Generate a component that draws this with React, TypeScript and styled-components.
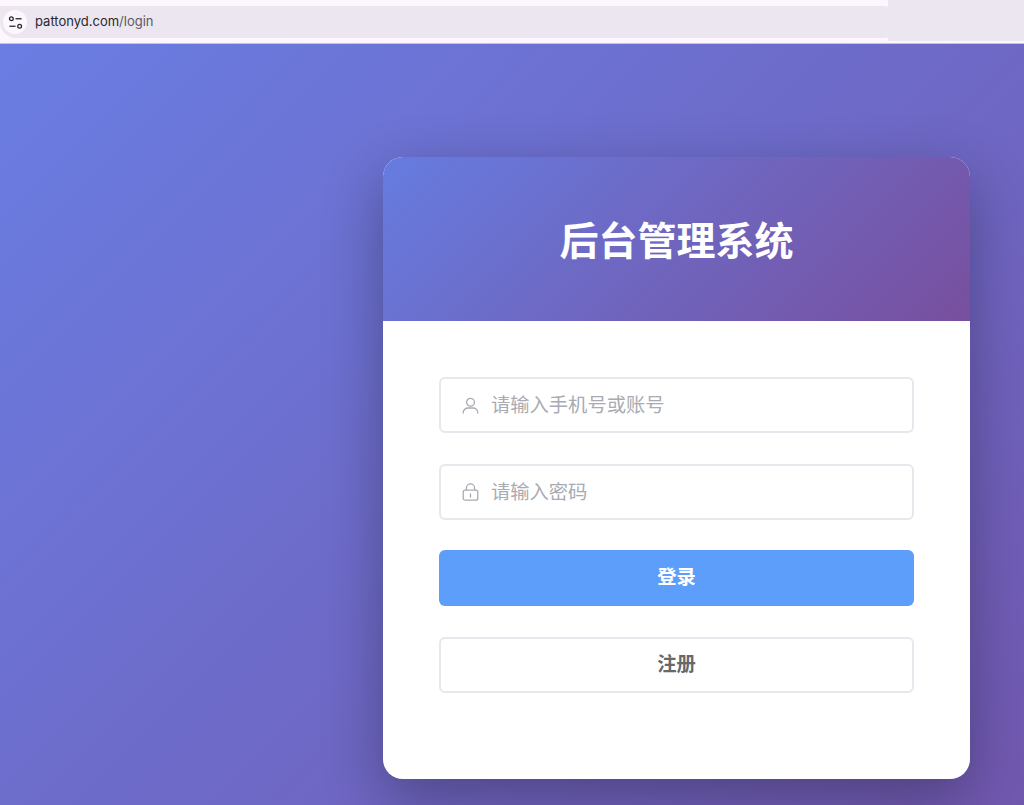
import React from "react";
import styled, { createGlobalStyle } from "styled-components";

const GlobalStyle = createGlobalStyle`
  html, body {
    margin: 0;
    padding: 0;
    height: 100%;
    overflow: hidden;
  }
  body {
    font-family: "Inter", "Noto Sans CJK SC", sans-serif;
  }
`;

const Page = styled.div`
  width: 1024px;
  height: 805px;
  display: flex;
  flex-direction: column;
  overflow: hidden;
`;

const BrowserBar = styled.header`
  height: 44px;
  flex: none;
  display: flex;
  background: #fdf7fd;
  box-sizing: border-box;
  border-bottom: 1px solid #c9bfe0;
`;

const UrlPill = styled.div`
  width: 888px;
  height: 32px;
  margin-top: 6px;
  display: flex;
  align-items: center;
  gap: 8px;
  box-sizing: border-box;
  background: #ebe6f0;
  border-radius: 0 2px 2px 16px;
`;

const BarFiller = styled.div`
  flex: 1;
  height: 41px;
  background: #ebe6f0;
`;

const TuneBadge = styled.span`
  width: 24px;
  height: 24px;
  margin-left: 3px;
  border-radius: 50%;
  background: #fdf7fd;
  display: flex;
  align-items: center;
  justify-content: center;
`;

const UrlText = styled.span`
  font-size: 13px;
  color: #2a282e;
  font-family: "Inter", sans-serif;
  margin-bottom: 2px;
`;

const UrlPath = styled.span`
  color: #5c5962;
`;

const Stage = styled.main`
  flex: 1;
  background: linear-gradient(135deg, #6a7de2 0%, #734fa3 125%);
  display: flex;
  justify-content: flex-end;
  align-items: flex-start;
  padding: 113px 54px 0 0;
`;

const Card = styled.section`
  width: 587px;
  height: 622px;
  border-radius: 20px;
  background: #fff;
  overflow: hidden;
  box-shadow: 0 20px 60px rgba(0, 0, 0, 0.3);
`;

const CardHeader = styled.div`
  height: 164px;
  background: linear-gradient(135deg, #667ce0 0%, #784f9e 100%);
  display: flex;
  align-items: center;
  justify-content: center;
`;

const Title = styled.h1`
  margin: 0 0 2px;
  color: #fff;
  font-size: 39px;
  font-weight: 700;
  font-family: "Noto Sans CJK SC", sans-serif;
  line-height: 1;
`;

const Form = styled.div`
  display: flex;
  flex-direction: column;
  gap: 30px;
  padding: 56px 56px 0;
`;

const Group = styled.div`
  display: flex;
  flex-direction: column;
  gap: 31px;
`;

const Field = styled.label`
  height: 56px;
  box-sizing: border-box;
  border: 2px solid #e6e8ee;
  border-radius: 6px;
  display: flex;
  align-items: center;
  gap: 12px;
  padding-left: 21px;
`;

const Input = styled.input`
  flex: 1;
  min-width: 0;
  border: none;
  outline: none;
  background: transparent;
  font-size: 19.3px;
  font-family: "Noto Sans CJK SC", sans-serif;
  padding: 0 0 3px;
  color: #606266;

  &::placeholder {
    color: #a8abb2;
    opacity: 1;
  }
`;

const Button = styled.button<{ $primary?: boolean }>`
  height: 56px;
  box-sizing: border-box;
  border-radius: 6px;
  border: ${(p) => (p.$primary ? "none" : "2px solid #e6e8ee")};
  background: ${(p) => (p.$primary ? "#5c9efa" : "#fff")};
  color: ${(p) => (p.$primary ? "#fff" : "#66686c")};
  font-size: 19.3px;
  font-weight: 700;
  font-family: "Noto Sans CJK SC", sans-serif;
  padding: 0 0 4px;
  cursor: pointer;
`;

const TuneIcon = () => (
  <svg width="15" height="15" viewBox="0 0 16 16" fill="none" stroke="#2b2830" strokeWidth="1.4">
    <circle cx="3.6" cy="4" r="2" />
    <path d="M8 4h6.5" />
    <path d="M1.5 12H8" />
    <circle cx="12.4" cy="12" r="2" />
  </svg>
);

const UserIcon = () => (
  <svg width="17" height="17" viewBox="0 0 17 17" fill="none" stroke="#a8abb2" strokeWidth="1.3">
    <circle cx="8.5" cy="5.2" r="3.9" />
    <path d="M1.2 16c0-3.2 2.4-5 5-5h4.6c2.6 0 5 1.8 5 5" strokeLinecap="round" />
  </svg>
);

const LockIcon = () => (
  <svg width="17" height="18" viewBox="0 0 17 18" fill="none" stroke="#a8abb2" strokeWidth="1.3">
    <rect x="1.2" y="7.2" width="14.6" height="10" rx="2" />
    <path d="M4.4 7.2V5a4.1 4.1 0 0 1 8.2 0v2.2" />
    <path d="M8.5 11v3" strokeLinecap="round" />
  </svg>
);

export default function App() {
  return (
    <Page>
      <GlobalStyle />
      <BrowserBar>
        <UrlPill>
          <TuneBadge>
            <TuneIcon />
          </TuneBadge>
          <UrlText>
            pattonyd.com<UrlPath>/login</UrlPath>
          </UrlText>
        </UrlPill>
        <BarFiller />
      </BrowserBar>
      <Stage>
        <Card>
          <CardHeader>
            <Title>后台管理系统</Title>
          </CardHeader>
          <Form>
            <Group>
              <Field>
                <UserIcon />
                <Input placeholder="请输入手机号或账号" />
              </Field>
              <Field>
                <LockIcon />
                <Input type="password" placeholder="请输入密码" />
              </Field>
            </Group>
            <Group>
              <Button $primary>登录</Button>
              <Button>注册</Button>
            </Group>
          </Form>
        </Card>
      </Stage>
    </Page>
  );
}
